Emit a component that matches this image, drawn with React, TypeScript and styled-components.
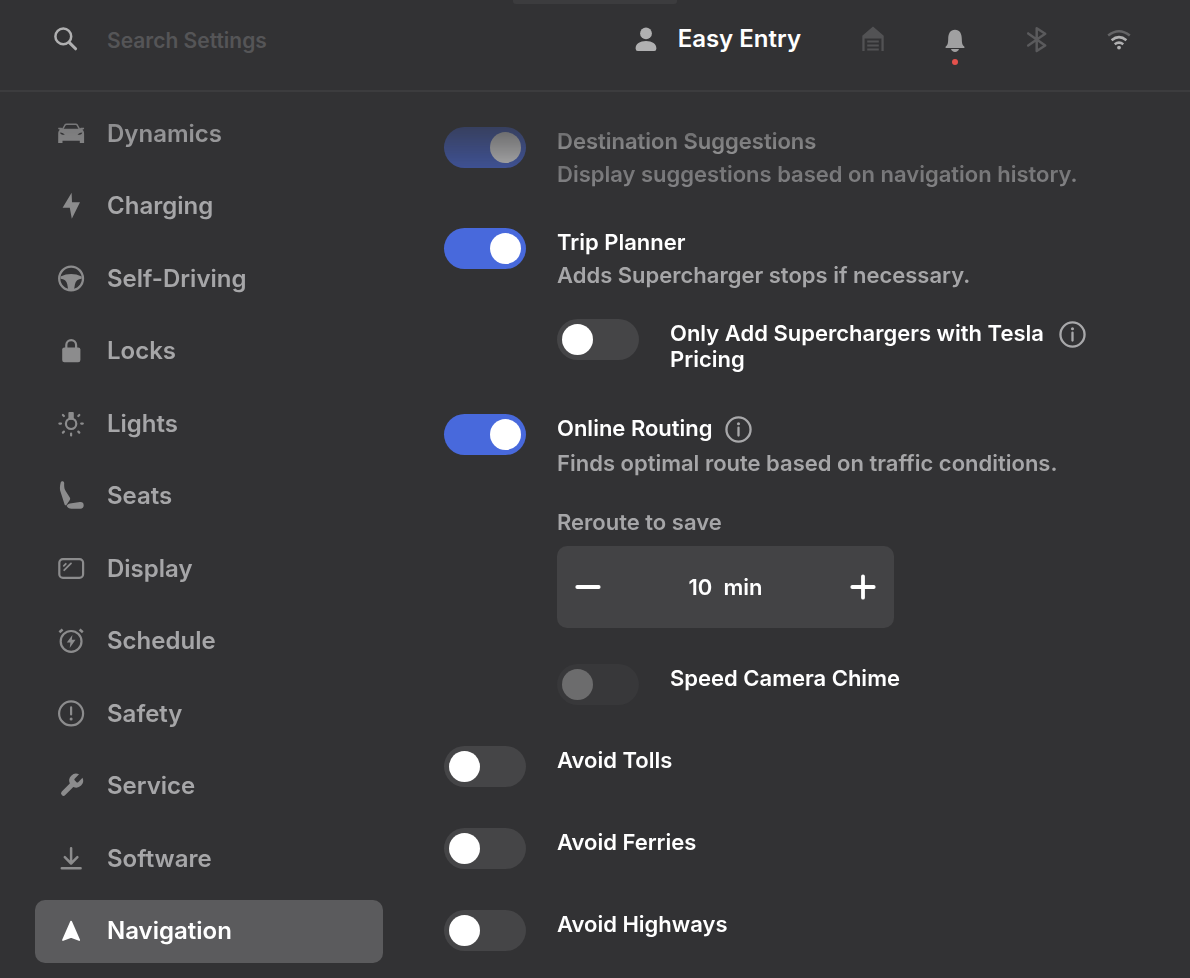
import React, { useState } from "react";
import styled, { createGlobalStyle, css } from "styled-components";

const GlobalStyle = createGlobalStyle`
  *, *::before, *::after { box-sizing: border-box; }
  body {
    margin: 0;
    background: #323234;
    color: #fff;
    font-family: Inter, "Liberation Sans", sans-serif;
    font-weight: 600;
  }
  button, input { font: inherit; color: inherit; }
`;

const Page = styled.div`
  display: flex;
  flex-direction: column;
  min-height: 100vh;
`;

const Handle = styled.div`
  width: 164px;
  height: 4px;
  margin: 0 auto;
  border-radius: 0 0 3px 3px;
  background: #3c3c3e;
`;

const Header = styled.header`
  display: flex;
  align-items: flex-start;
  height: 88px;
  padding: 20px 56px 0 51px;
  border-bottom: 2px solid #3c3c3e;
`;

const Search = styled.label`
  display: flex;
  align-items: center;
  gap: 26px;
  color: #b0b0b1;
`;

const SearchInput = styled.input`
  width: 320px;
  height: 30px;
  padding: 2px 0 0;
  border: 0;
  outline: 0;
  background: none;
  font-size: 21px;
  &::placeholder { color: #555557; opacity: 1; }
`;

const HeaderActions = styled.div`
  display: flex;
  align-items: center;
  gap: 52px;
  margin-left: auto;
`;

const Profile = styled.button`
  display: flex;
  align-items: center;
  gap: 17px;
  height: 30px;
  margin-right: 5px;
  padding: 0;
  border: 0;
  background: none;
  font-size: 24px;
  line-height: 30px;
`;

const ProfileIcon = styled.span`
  display: flex;
  color: #b0b0b1;
`;

const StatusButton = styled.button<{ $color: string }>`
  position: relative;
  display: flex;
  height: 30px;
  padding: 0;
  border: 0;
  background: none;
  color: ${(p) => p.$color};
`;

const AlertDot = styled.span`
  position: absolute;
  left: 12px;
  top: 35px;
  width: 6px;
  height: 6px;
  border-radius: 50%;
  background: #e4514c;
`;

const Body = styled.div`
  display: flex;
  flex: 1;
`;

const Sidebar = styled.nav`
  display: flex;
  flex-direction: column;
  justify-content: space-between;
  gap: 8px;
  flex: 0 0 383px;
  padding: 10px 0 15px 35px;
  mask-image: linear-gradient(rgba(0, 0, 0, 0.6), #000 70px);
`;

const NavLink = styled.a<{ $active: boolean }>`
  display: flex;
  align-items: center;
  gap: 21px;
  height: 63px;
  padding-left: 21px;
  border-radius: 10px;
  color: #8c8c8d;
  font-size: 24px;
  line-height: 30px;
  text-decoration: none;
  span { color: #a6a6a8; }
  ${(p) =>
    p.$active &&
    css`
      background: #5b5b5d;
      color: #fff;
      span { color: #fff; }
    `}
`;

const Content = styled.main`
  display: flex;
  flex: 1;
  flex-direction: column;
  gap: 41px;
  min-width: 0;
  padding: 35px 104px 27px 61px;
  mask-image: linear-gradient(transparent, #000 135px);
`;

const Row = styled.div`
  display: flex;
  gap: 31px;
  min-height: 41px;
`;

const RowBody = styled.div`
  flex: 1;
  min-width: 0;
  padding-top: 1px;
`;

const TitleLine = styled.div`
  display: flex;
  align-items: flex-start;
  gap: 12px;
`;

const Title = styled.label`
  font-size: 22px;
  line-height: 26px;
`;

const InfoButton = styled.button`
  display: flex;
  flex: none;
  margin-top: 1px;
  padding: 0;
  border: 0;
  background: none;
  color: #a8a8aa;
`;

const Description = styled.p`
  margin: 7px 0 0;
  color: #a6a6a8;
  font-size: 22px;
  line-height: 26px;
`;

const Nested = styled.div`
  margin-top: 31px;
  padding-bottom: 1px;
`;

const Switch = styled.input`
  appearance: none;
  flex: none;
  display: flex;
  align-items: center;
  width: 82px;
  height: 41px;
  margin: 0;
  padding: 0 5px;
  border-radius: 21px;
  background: #454547;
  &::before {
    content: "";
    width: 31px;
    height: 31px;
    border-radius: 50%;
    background: #fff;
  }
  &:checked {
    justify-content: flex-end;
    background: #4869dc;
  }
  &:disabled { background: #38383a; }
  &:disabled::before { background: #6c6c6d; }
`;

const FieldLabel = styled.div`
  margin: 33px 0 11px;
  color: #a6a6a8;
  font-size: 22px;
  line-height: 26px;
`;

const Stepper = styled.div`
  display: flex;
  align-items: center;
  justify-content: space-between;
  width: 337px;
  height: 82px;
  margin-bottom: 36px;
  padding: 0 16px;
  border-radius: 10px;
  background: #434345;
`;

const StepButton = styled.button`
  display: flex;
  padding: 0;
  border: 0;
  background: none;
`;

const StepValue = styled.output`
  display: flex;
  gap: 11px;
  font-size: 22px;
  line-height: 26px;
`;

/* All icons share one 28-unit grid with a 1-unit bleed, in current colour. */
const Icon = ({ children }: { children: React.ReactNode }) => (
  <svg width="30" height="30" viewBox="-1 -1 30 30" fill="none" stroke="currentColor" strokeWidth="2.2" strokeLinecap="round" strokeLinejoin="round" aria-hidden="true">
    {children}
  </svg>
);

const solid = { fill: "currentColor", stroke: "none" };

const icons = {
  search: (
    <>
      <circle cx="11.3" cy="11.4" r="7.9" strokeWidth="2.5" />
      <path d="M17.4 17.6 23.6 23.8" strokeWidth="3" />
    </>
  ),
  car: (
    <>
      <path d="M5.6 9.4 8 5q.5-.8 1.4-.8h9.4q.9 0 1.4.8l2.4 4.4" strokeWidth="1.5" />
      <path {...solid} fillRule="evenodd" d="M1.3 7.8h3.2l1.2 1h16.9l1.2-1h3.2l.1 1.2-1.7.8c1.3 1.1 1.7 2.2 1.7 4v9.2h-4.3v-2.200H5.500v2.200H1.200v-9.200c0-1.800.4-2.900 1.700-4L1.200 9ZM3 12.400c.2 1.700 1.800 2.500 4.800 2.400-.8-1.400-2.500-2.200-4.800-2.400Zm22.300 0c-2.300.2-4 1-4.800 2.400 3 .1 4.600-.7 4.800-2.400Z" />
    </>
  ),
  bolt: <path {...solid} d="M14.600.8 5.600 15.800h7.200L14.800 26.800 23 10.200h-8Z" />,
  wheel: (
    <>
      <circle cx="14.1" cy="13.5" r="11.9" strokeWidth="2.3" />
      <path {...solid} d="M3.5 11.4q10.600-4.600 21.200 0v2.400q-5.600.4-6.800 5.600l-1 6h-5.600l-1-6q-1.200-5.200-6.800-5.600Z" />
    </>
  ),
  lock: (
    <>
      <path d="M9.300 11.500V8a4.900 4.900 0 0 1 9.800 0v3.500" />
      <rect {...solid} x="5.2" y="10.4" width="18.2" height="14.8" rx="2.2" />
    </>
  ),
  light: (
    <>
      <circle cx="14.1" cy="13.8" r="5.2" />
      <path {...solid} d="M11.400 3q0-1 1-1h3.400q1 0 1 1v6.500h-5.400Z" />
      <path d="M2.400 13.600h1.600M24.200 13.600h1.600M14.100 23.600v1.800M5.900 5l1 1M22.300 5l-1 1M5.900 22.600l1-1M22.300 22.600l-1-1" />
    </>
  ),
  seat: (
    <>
      <path {...solid} d="M3.600 1C3.800-1.300 7-1.300 7.200 1c-.2 4 .1 5.900 1.600 8.200l4 6.400c.5.9.5 1.600 0 2.500L9.600 22.800c-.5.800-1.700.7-2-.4L3.200 8.700C2.700 6.500 2.900 3.500 3.600 1Z" />
      <path {...solid} d="M9.600 23.800c1-1.500 2.500-2.300 5-2.600l8.200-1.200c2.400-.3 3.900.9 3.900 3.200s-1.200 3.500-3.400 3.500h-8.800c-2.400 0-4-.8-4.900-2.900Z" />
    </>
  ),
  display: (
    <>
      <rect x="2.3" y="4.2" width="23.8" height="18.6" rx="3.6" />
      <path d="m7.200 15.200 6.800-6.800M6.800 10.800l2-2" strokeWidth="1.8" />
    </>
  ),
  schedule: (
    <>
      <circle cx="14.1" cy="14.4" r="10.4" />
      <path d="m2.400 5.200 3.200-2.700M25.800 5.200l-3.200-2.700" strokeWidth="2.6" strokeLinecap="butt" />
      <path {...solid} d="m15.400 8-5.600 7.600h3.600l-.7 5.400 5.800-8.200h-3.700Z" />
    </>
  ),
  safety: (
    <>
      <circle cx="14.1" cy="13.4" r="12" />
      <path d="M14.100 7.400v7" />
      <circle {...solid} cx="14.1" cy="19" r="1.5" />
    </>
  ),
  wrench: (
    <g transform="translate(0.6 -0.6) scale(1.16)">
      <path {...solid} d="M14.700 6.300a1 1 0 0 0 0 1.400l1.600 1.600a1 1 0 0 0 1.400 0l3.770-3.770a6 6 0 0 1-7.940 7.940l-6.910 6.910a2.120 2.120 0 0 1-3-3l6.910-6.910a6 6 0 0 1 7.940-7.940l-3.760 3.760z" />
    </g>
  ),
  download: <path d="M14.100 3.200v15M7.800 12.200l6.300 6.300 6.300-6.300M4.800 23.300h18.800" strokeWidth="2.5" />,
  navigation: <path d="M14.100 4.600 6 23l8.100-3.200 8.100 3.200Z" fill="currentColor" strokeWidth="1.8" />,
  person: (
    <g {...solid}>
      <circle cx="14" cy="8.4" r="5.9" />
      <path d="M3.600 23.500c0-4.500 4.200-7.400 10.400-7.400s10.400 2.900 10.400 7.400q0 2.600-2.200 2.600H5.800q-2.200 0-2.200-2.600Z" />
    </g>
  ),
  garage: (
    <>
      <path {...solid} d="M14 1.600 24.700 10.800V26h-2.300V13.600H5.600V26H3.300V10.800Z" />
      <path d="M8.200 16.400h11.600M8.200 20.400h11.600M8.200 24.600h11.600" strokeWidth="2" strokeLinecap="butt" />
    </>
  ),
  bell: (
    <g {...solid}>
      <path d="M4.600 22.900v-1.200c2-1.400 2.500-3.300 2.600-7.600.1-5.600 2-9.300 6.800-9.300s6.700 3.700 6.800 9.300c.1 4.300.6 6.200 2.600 7.600v1.200Z" />
      <path d="M10 24.100h8q-.8 2.800-4 2.800t-4-2.800Z" />
    </g>
  ),
  bluetooth: <path d="M5.200 8.400 22.200 20.500 13.700 26V3.200L22.200 8.700 5.200 20.500" strokeWidth="2.5" />,
  wifi: (
    <>
      <path d="M3.200 10.600Q14 2 24.800 10.600" opacity=".4" strokeWidth="2.5" strokeLinecap="butt" />
      <path d="M6.600 15.200Q14 9 21.400 15.200M9.700 19.300Q14 16 18.300 19.300" strokeWidth="2.5" strokeLinecap="butt" />
      <circle {...solid} cx="14" cy="22.6" r="1.9" />
    </>
  ),
  info: (
    <>
      <circle cx="14" cy="14" r="12.5" />
      <path d="M14 12.200v8" />
      <circle {...solid} cx="14" cy="8" r="1.6" />
    </>
  ),
  minus: <path d="M3.300 14h21.400" strokeWidth="3.8" />,
  plus: <path d="M3.300 14h21.400M14 3.300v21.400" strokeWidth="3.8" />,
};

type IconName = keyof typeof icons;

const navItems: [string, IconName][] = [
  ["Dynamics", "car"],
  ["Charging", "bolt"],
  ["Self-Driving", "wheel"],
  ["Locks", "lock"],
  ["Lights", "light"],
  ["Seats", "seat"],
  ["Display", "display"],
  ["Schedule", "schedule"],
  ["Safety", "safety"],
  ["Service", "wrench"],
  ["Software", "download"],
  ["Navigation", "navigation"],
];

type SettingProps = {
  id: string;
  title: string;
  description?: string;
  on?: boolean;
  disabled?: boolean;
  info?: boolean;
  children?: React.ReactNode;
};

const Setting = ({ id, title, description, on = false, disabled, info, children }: SettingProps) => (
  <Row>
    <Switch type="checkbox" role="switch" id={id} defaultChecked={on} disabled={disabled} />
    <RowBody>
      <TitleLine>
        <Title htmlFor={id}>{title}</Title>
        {info && (
          <InfoButton type="button" aria-label={`About ${title}`}>
            <svg width="27" height="27" viewBox="0 0 28 28" fill="none" stroke="currentColor" strokeWidth="2.4" strokeLinecap="round" aria-hidden="true">
              {icons.info}
            </svg>
          </InfoButton>
        )}
      </TitleLine>
      {description && <Description>{description}</Description>}
      {children}
    </RowBody>
  </Row>
);

export default function App() {
  const [minutes, setMinutes] = useState(10);
  return (
    <>
      <GlobalStyle />
      <Page>
        <Handle />
        <Header>
          <Search>
            <Icon>{icons.search}</Icon>
            <SearchInput type="text" placeholder="Search Settings" aria-label="Search Settings" />
          </Search>
          <HeaderActions>
            <Profile type="button">
              <ProfileIcon>
                <Icon>{icons.person}</Icon>
              </ProfileIcon>
              Easy Entry
            </Profile>
            <StatusButton type="button" aria-label="Garage" $color="#525254">
              <Icon>{icons.garage}</Icon>
            </StatusButton>
            <StatusButton type="button" aria-label="Notifications" $color="#a0a0a1">
              <Icon>{icons.bell}</Icon>
              <AlertDot />
            </StatusButton>
            <StatusButton type="button" aria-label="Bluetooth" $color="#5a5a5c">
              <Icon>{icons.bluetooth}</Icon>
            </StatusButton>
            <StatusButton type="button" aria-label="Wi-Fi" $color="#b0b0b1">
              <Icon>{icons.wifi}</Icon>
            </StatusButton>
          </HeaderActions>
        </Header>
        <Body>
          <Sidebar aria-label="Settings">
            {navItems.map(([label, icon]) => (
              <NavLink key={label} href={`#${label}`} $active={label === "Navigation"}>
                <Icon>{icons[icon]}</Icon>
                <span>{label}</span>
              </NavLink>
            ))}
          </Sidebar>
          <Content>
            <Setting id="suggestions" title="Destination Suggestions" description="Display suggestions based on navigation history." on />
            <Setting id="trip" title="Trip Planner" description="Adds Supercharger stops if necessary." on>
              <Nested>
                <Setting id="pricing" title="Only Add Superchargers with Tesla Pricing" info />
              </Nested>
            </Setting>
            <Setting id="routing" title="Online Routing" description="Finds optimal route based on traffic conditions." on info>
              <FieldLabel id="reroute-label">Reroute to save</FieldLabel>
              <Stepper role="group" aria-labelledby="reroute-label">
                <StepButton type="button" aria-label="Decrease" onClick={() => setMinutes((m) => Math.max(0, m - 1))}>
                  <Icon>{icons.minus}</Icon>
                </StepButton>
                <StepValue>
                  <span>{minutes}</span>
                  <span>min</span>
                </StepValue>
                <StepButton type="button" aria-label="Increase" onClick={() => setMinutes((m) => m + 1)}>
                  <Icon>{icons.plus}</Icon>
                </StepButton>
              </Stepper>
              <Setting id="camera" title="Speed Camera Chime" disabled />
            </Setting>
            <Setting id="tolls" title="Avoid Tolls" />
            <Setting id="ferries" title="Avoid Ferries" />
            <Setting id="highways" title="Avoid Highways" />
          </Content>
        </Body>
      </Page>
    </>
  );
}
